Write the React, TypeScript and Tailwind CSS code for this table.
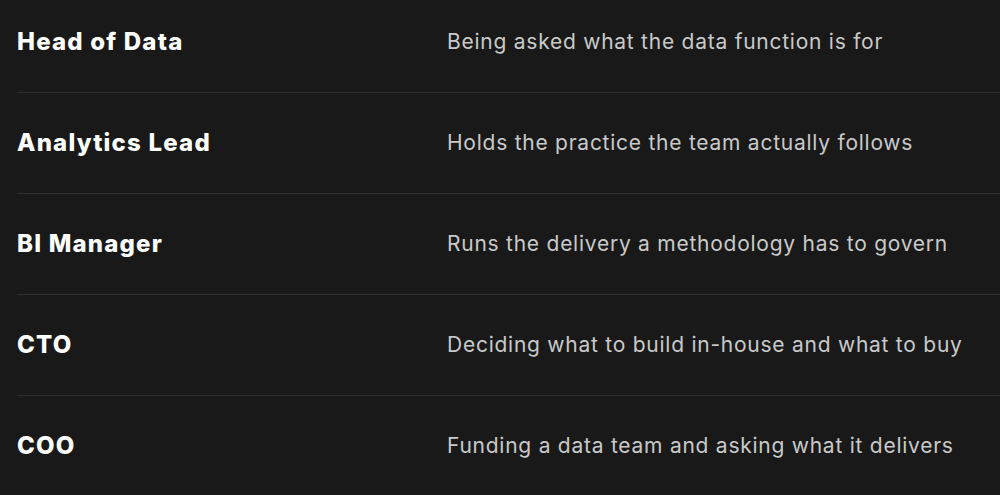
const rows = [
    { role: 'Head of Data', need: 'Being asked what the data function is for' },
    { role: 'Analytics Lead', need: 'Holds the practice the team actually follows' },
    { role: 'BI Manager', need: 'Runs the delivery a methodology has to govern' },
    { role: 'CTO', need: 'Deciding what to build in-house and what to buy' },
    { role: 'COO', need: 'Funding a data team and asking what it delivers' },
];

export default function App() {
    return (
        <div className="w-full h-[495px] overflow-hidden bg-[#191919] font-['Inter','Liberation_Sans',sans-serif]">
            <div className="-mt-[8px] pl-[17px]">
                {rows.map((row) => (
                    <div key={row.role} className="h-[101px] grid grid-cols-[430px_1fr] items-center border-b border-[#2e2e2e]">
                        <span className="text-[24px] font-extrabold text-white tracking-[1.2px]">{row.role}</span>
                        <span className="text-[21px] text-[#c9c9c9] tracking-[0.75px]">{row.need}</span>
                    </div>
                ))}
            </div>
        </div>
    );
}
